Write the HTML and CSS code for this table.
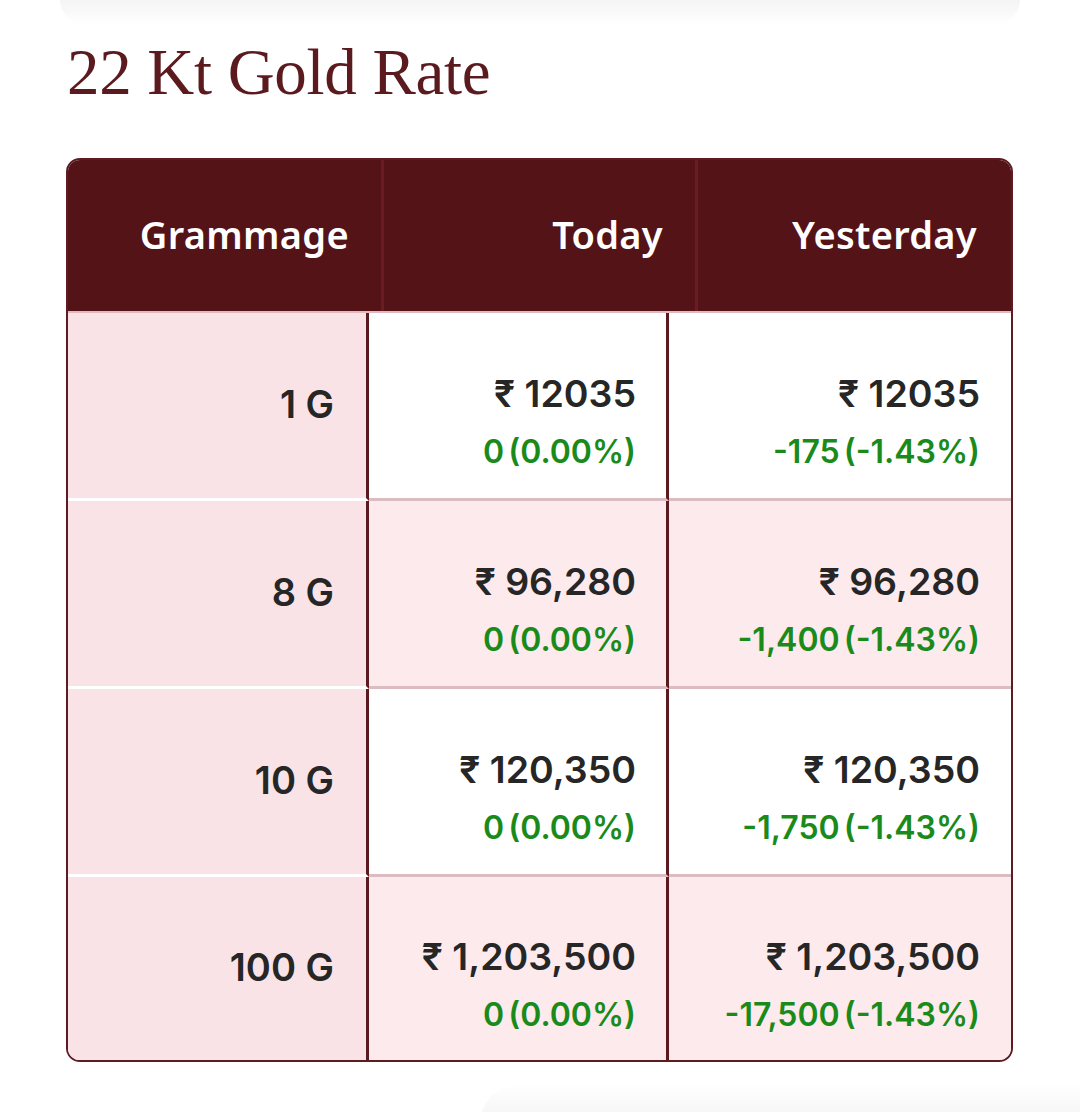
FILE: index.html
```html
<!DOCTYPE html>
<html lang="en">
<head>
<meta charset="utf-8">
<title>22 Kt Gold Rate</title>
<link rel="stylesheet" href="styles.css">
</head>
<body>
<div class="top-shade"></div>
<main class="page">
  <h1 class="title">22 Kt Gold Rate</h1>
  <section class="rate-table">
    <div class="thead">
      <div class="th">Grammage</div>
      <div class="th">Today</div>
      <div class="th">Yesterday</div>
    </div>
    <div class="tbody">
      <div class="row">
        <div class="cell gram">1 G</div>
        <div class="cell val"><span class="price">₹ 12035</span><span class="chg">0 (0.00%)</span></div>
        <div class="cell val"><span class="price">₹ 12035</span><span class="chg">-175 (-1.43%)</span></div>
      </div>
      <div class="row alt">
        <div class="cell gram">8 G</div>
        <div class="cell val"><span class="price">₹ 96,280</span><span class="chg">0 (0.00%)</span></div>
        <div class="cell val"><span class="price">₹ 96,280</span><span class="chg">-1,400 (-1.43%)</span></div>
      </div>
      <div class="row">
        <div class="cell gram">10 G</div>
        <div class="cell val"><span class="price">₹ 120,350</span><span class="chg">0 (0.00%)</span></div>
        <div class="cell val"><span class="price">₹ 120,350</span><span class="chg">-1,750 (-1.43%)</span></div>
      </div>
      <div class="row alt last">
        <div class="cell gram">100 G</div>
        <div class="cell val"><span class="price">₹ 1,203,500</span><span class="chg">0 (0.00%)</span></div>
        <div class="cell val"><span class="price">₹ 1,203,500</span><span class="chg">-17,500 (-1.43%)</span></div>
      </div>
    </div>
  </section>
</main>
<div class="bottom-shade"></div>
</body>
</html>
```
FILE: styles.css
```css
* { box-sizing: border-box; }
html, body { margin: 0; padding: 0; background: #ffffff; }
body { font-family: "Noto Sans", "Open Sans", sans-serif; overflow: hidden; height: 1112px; }

.top-shade {
  height: 24px;
  margin: 0 60px;
  background: linear-gradient(#f4f4f4, #ffffff);
  border-radius: 0 0 40px 40px;
}

.page { padding: 0 67px 0 66px; }

.title {
  margin: 8px 0 0 1px;
  font-family: "Liberation Serif", "DejaVu Serif", serif;
  font-weight: 400;
  font-size: 65px;
  line-height: 80px;
  color: #5b1a1e;
  letter-spacing: -0.3px;
}

.rate-table {
  margin-top: 46px;
  border: 2px solid #5c1c21;
  border-radius: 14px;
  overflow: hidden;
  width: 947px;
}

.thead {
  display: grid;
  grid-template-columns: 316px 314px 1fr;
  background: #541317;
  height: 153px;
  border-bottom: 2px solid #e3b9bf;
}
.th {
  display: flex;
  align-items: center;
  justify-content: flex-end;
  padding: 0 32px 4px 0;
  color: #ffffff;
  font-weight: 600;
  font-size: 38px;
  letter-spacing: 0.3px;
  border-right: 3px solid #6a1c22;
}
.th:last-child { border-right: none; padding-right: 34px; }

.tbody { display: flex; flex-direction: column; }
.row {
  display: grid;
  grid-template-columns: 301px 300px 1fr;
  height: 188px;
  background: #ffffff;
  font-family: "Inter", "Noto Sans", sans-serif;
}
.row.alt { background: #fceaed; }
.row.last { height: 183px; }

.cell {
  padding: 0 32px 0 0;
  border-bottom: 3px solid #dcbcc1;
}
.row.last .cell { border-bottom: none; }
.cell.gram {
  background: #f9e3e7;
  border-bottom-color: #ffffff;
  border-right: 3px solid #5a1a1f;
  display: flex;
  align-items: center;
  justify-content: flex-end;
  padding-bottom: 4px;
  font-weight: 600;
  font-size: 38px;
  color: #262626;
}
.cell.val {
  display: flex;
  flex-direction: column;
  align-items: flex-end;
  justify-content: center;
  padding-top: 32px;
}
.cell.val:nth-child(2) { border-right: 3px solid #5a1a1f; padding-right: 30px; }
.cell.val:nth-child(3) { padding-right: 31px; }

.price {
  font-weight: 600;
  font-size: 37.5px;
  line-height: 44px;
  color: #262626;
}
.chg {
  margin-top: 16px;
  font-weight: 600;
  font-size: 32px;
  line-height: 40px;
  color: #1a8a1a;
  letter-spacing: 0;
  word-spacing: -4px;
}

.bottom-shade {
  margin: 22px 0 0 480px;
  height: 40px;
  background: linear-gradient(#ffffff, #f3f3f3);
  border-radius: 40px 0 0 0;
}
```
